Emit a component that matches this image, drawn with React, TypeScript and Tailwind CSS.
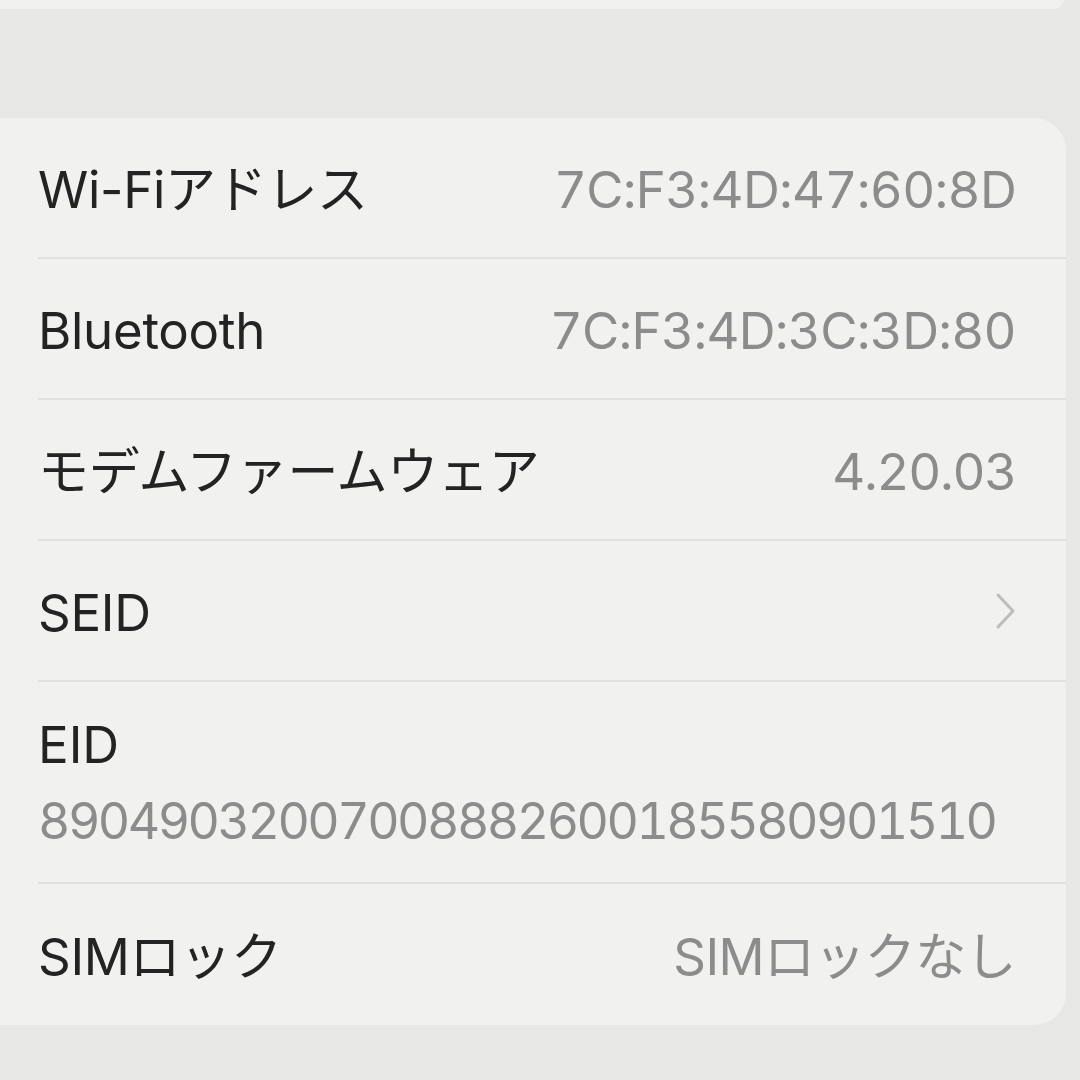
import React from "react";

const sans = "font-['Inter','Noto_Sans_CJK_JP',sans-serif]";

function Row({ label, value, valueClass, chevron, last }: { label: string; value?: string; valueClass?: string; chevron?: boolean; last?: boolean }) {
  return (
    <div className="pl-[38px]">
      <div className={`flex h-[141px] items-center justify-between pr-[50px] ${last ? "" : "border-b-2 border-[#e0e0de]"}`}>
        <span className="text-[51px] leading-none text-[#232323] tracking-[-0.3px] pt-[4px]">{label}</span>
        {value && (
          <span className={`text-[51px] leading-none text-[#8c8c8c] [font-feature-settings:'tnum'] pt-[4px] ${valueClass ?? ""}`}>{value}</span>
        )}
        {chevron && (
          <svg width="24" height="38" viewBox="0 0 24 38" className="mr-[-2px]">
            <path d="M4 3 L19 19 L4 35" fill="none" stroke="#bcbcbc" strokeWidth="3" strokeLinecap="round" strokeLinejoin="round" />
          </svg>
        )}
      </div>
    </div>
  );
}

export default function App() {
  return (
    <div className={`h-[1080px] w-[1080px] overflow-hidden bg-[#e7e7e6] ${sans}`}>
      <div className="mr-[16px] h-[9px] rounded-br-[24px] bg-[#f0f0ee]" />
      <div className="mt-[109px] mr-[14px] rounded-r-[32px] bg-[#f1f1ef]">
        <Row label="Wi-Fiアドレス" value="7C:F3:4D:47:60:8D" valueClass="tracking-[-0.7px]" />
        <Row label="Bluetooth" value="7C:F3:4D:3C:3D:80" valueClass="tracking-[-0.7px]" />
        <Row label="モデムファームウェア" value="4.20.03" valueClass="tracking-[-1.3px]" />
        <Row label="SEID" chevron />
        <div className="pl-[38px]">
          <div className="flex h-[202px] flex-col justify-center gap-[26px] border-b-2 border-[#e0e0de] pr-[50px]">
            <span className="text-[51px] leading-none text-[#232323]">EID</span>
            <span className="text-[50px] leading-none text-[#8c8c8c] [font-feature-settings:'tnum'] tracking-[-2.5px] whitespace-nowrap">
              89049032007008882600185580901510
            </span>
          </div>
        </div>
        <Row label="SIMロック" value="SIMロックなし" valueClass="tracking-[-0.6px]" last />
      </div>
    </div>
  );
}
